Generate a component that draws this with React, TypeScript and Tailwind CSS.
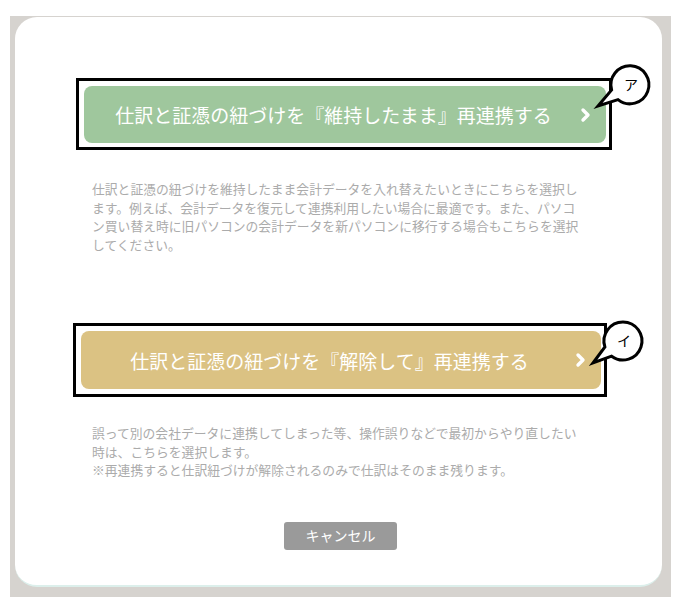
import React from "react"

interface CalloutProps {
  label: string
  cx: number
  cy: number
  tip: [number, number]
  b1: [number, number]
  b2: [number, number]
  className: string
}

// speech-bubble marker drawn over the top-right corner of a framed button
function Callout({ label, cx, cy, tip, b1, b2, className }: CalloutProps) {
  const d = `M ${b1[0]} ${b1[1]} L ${tip[0]} ${tip[1]} L ${b2[0]} ${b2[1]} A 19 19 0 1 1 ${b1[0]} ${b1[1]} Z`
  return (
    <svg className={`absolute ${className}`} width="80" height="72" viewBox="0 0 80 72">
      <path d={d} fill="#fff" stroke="#000" strokeWidth="3" strokeLinejoin="miter" />
      <text x={cx + 1} y={cy + 5} textAnchor="middle" fontSize="14" fill="#000"
        fontFamily="'Noto Sans CJK JP', sans-serif">{label}</text>
    </svg>
  )
}

function Chevron() {
  return (
    <svg className="absolute right-[15px] top-1/2 -translate-y-1/2" width="11" height="15" viewBox="0 0 11 15">
      <polyline points="3,2.5 8,7.5 3,12.5" fill="none" stroke="#fff" strokeWidth="3.4" strokeLinecap="round" strokeLinejoin="round" />
    </svg>
  )
}

const para1 = [
  "仕訳と証憑の紐づけを維持したまま会計データを入れ替えたいときにこちらを選択し",
  "ます。例えば、会計データを復元して連携利用したい場合に最適です。また、パソコ",
  "ン買い替え時に旧パソコンの会計データを新パソコンに移行する場合もこちらを選択",
  "してください。",
]

const para2 = [
  "誤って別の会社データに連携してしまった等、操作誤りなどで最初からやり直したい",
  "時は、こちらを選択します。",
  "※再連携すると仕訳紐づけが解除されるのみで仕訳はそのまま残ります。",
]

function Para({ lines, className }: { lines: string[]; className: string }) {
  return (
    <p className={`ml-[77px] flex flex-col text-[12.8px] leading-[18.5px] text-[#ababab] ${className}`}>
      {lines.map((l, i) => (
        <span key={i} className="whitespace-nowrap">{l}</span>
      ))}
    </p>
  )
}

export default function App() {
  return (
    <div className="flex h-[597px] w-[675px] overflow-hidden bg-white pl-[10px] pt-[16px] font-['Noto_Sans_CJK_JP',sans-serif]">
      <div className="flex h-[581px] w-[661px] bg-[#d6d3cf] pl-[5px] pt-[1px]">
        <div className="flex h-[570px] w-[647px] flex-col items-start rounded-[22px] border-b-2 border-[#dcefeb] bg-white pt-[61px]">
          {/* keep link */}
          <div className="relative ml-[61px] flex h-[72px] w-[536px] border-[3px] border-black pb-[4px] pl-[5px] pr-[3px] pt-[5px]">
            <button className="relative flex flex-1 items-center justify-center rounded-[8px] bg-[#9fc79d] pr-[23px] text-[19px] leading-none text-white">
              仕訳と証憑の紐づけを『維持したまま』再連携する
              <Chevron />
            </button>
            <Callout className="left-[500px] top-[-25px]" label="ア" cx={51} cy={29} tip={[19, 50]} b1={[39, 43.6]} b2={[32.6, 33.9]} />
          </div>
          <Para lines={para1} className="mt-[30px]" />

          {/* release link */}
          <div className="relative ml-[58px] mt-[69px] flex h-[74px] w-[534px] border-[3px] border-black pb-[5px] pl-[5px] pr-[3px] pt-[5px]">
            <button className="relative flex flex-1 items-center justify-center rounded-[8px] bg-[#dbc283] pr-[23px] text-[19px] leading-none text-white">
              仕訳と証憑の紐づけを『解除して』再連携する
              <Chevron />
            </button>
            <Callout className="left-[500px] top-[-25px]" label="イ" cx={47} cy={40} tip={[17, 62]} b1={[35.6, 55.2]} b2={[28.9, 45.9]} />
          </div>
          <Para lines={para2} className="mt-[27px]" />

          <button className="ml-[269px] mt-[42px] flex h-[28px] w-[113px] items-center justify-center rounded-[3px] bg-[#9a9a9a] text-[14px] text-white">
            キャンセル
          </button>
        </div>
      </div>
    </div>
  )
}
